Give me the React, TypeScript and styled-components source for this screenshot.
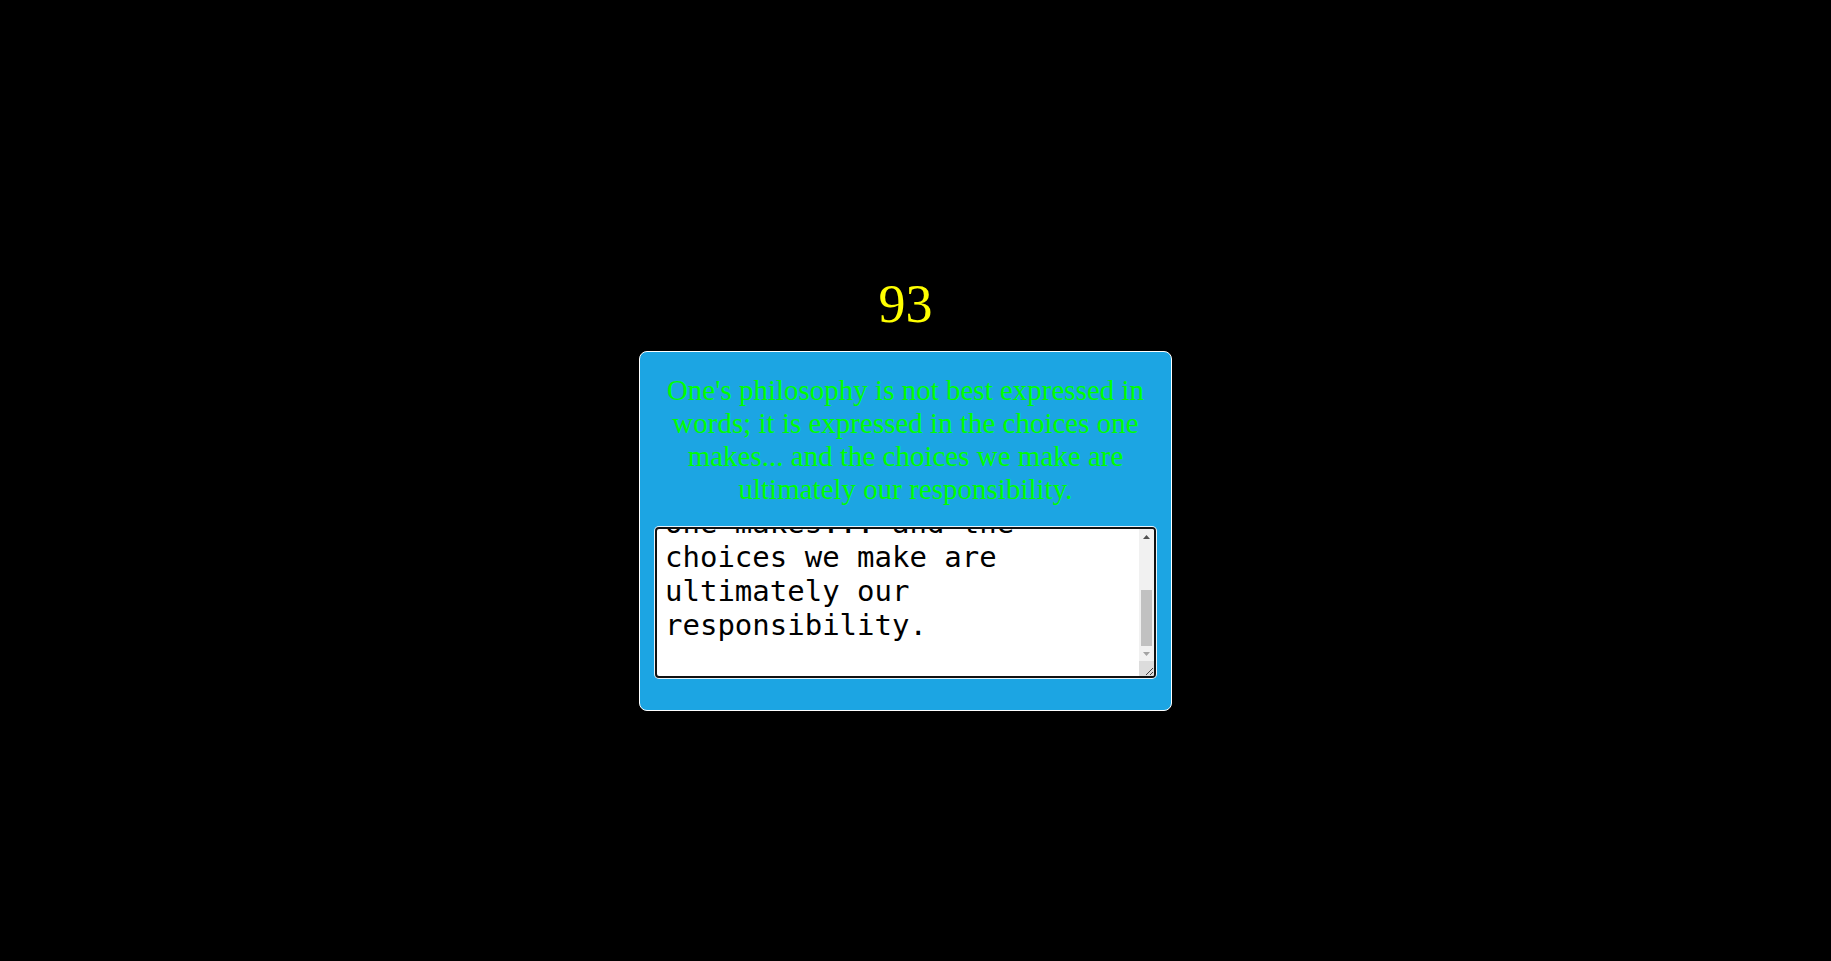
import React, { useEffect, useRef, useState } from 'react'
import styled, { createGlobalStyle } from 'styled-components'

const GlobalStyle = createGlobalStyle`
  html, body {
    margin: 0;
    padding: 0;
    background: #000;
  }
`

const Page = styled.main`
  min-height: 100vh;
  box-sizing: border-box;
  display: flex;
  flex-direction: column;
  align-items: center;
  padding: 270px 20px 0 0;
  font-family: 'Liberation Serif', 'Times New Roman', serif;
`

const Counter = styled.h1`
  margin: 0 0 12px;
  font-size: 54px;
  font-weight: normal;
  color: #ffff00;
  line-height: 69px;
`

const Card = styled.section`
  width: 533px;
  box-sizing: border-box;
  background: #1ca5e3;
  border: 1px solid #fff;
  border-radius: 8px;
  padding: 22px 15px 32px;
`

const Quote = styled.p`
  margin: 0 0 21px;
  font-size: 29px;
  color: #00ff00;
  text-align: center;
`

const EditorWrap = styled.div`
  position: relative;
`

const Editor = styled.textarea`
  display: block;
  width: 100%;
  height: 151px;
  box-sizing: border-box;
  margin: 0;
  padding: 5px 15px 0 8px;
  font-family: 'DejaVu Sans Mono', 'Liberation Mono', monospace;
  font-size: 29px;
  color: #000;
  caret-color: #000;
  background: #fff;
  border: 2px solid #111;
  border-radius: 4px;
  box-shadow: 0 0 0 1px #e8f4fb;
  outline: none;
  resize: both;
  overflow: hidden;
`

/* drawn scrollbar, the headless screenshot hides native ones */
const ScrollBar = styled.div`
  position: absolute;
  top: 2px;
  right: 2px;
  bottom: 2px;
  width: 15px;
  display: flex;
  flex-direction: column;
  background: #f1f1f1;
  pointer-events: none;
  border-radius: 0 2px 2px 0;
  overflow: hidden;
`

const ArrowButton = styled.div`
  height: 15px;
  flex: none;
  display: flex;
  align-items: center;
  justify-content: center;
`

const Track = styled.div`
  flex: 1;
  display: flex;
  flex-direction: column;
  justify-content: flex-end;
  align-items: center;
`

const Thumb = styled.div<{ $size: number }>`
  width: 11px;
  height: ${(p) => p.$size}px;
  background: #c1c1c1;
`

const Corner = styled.div`
  height: 15px;
  flex: none;
  background: #dcdcdc;
  display: flex;
  align-items: flex-end;
  justify-content: flex-end;
`

const QUOTE =
  "One's philosophy is not best expressed in words; it is expressed in the choices one makes... and the choices we make are ultimately our responsibility."

export default function App() {
  const [text, setText] = useState(QUOTE + '\n')
  const ref = useRef<HTMLTextAreaElement>(null)

  useEffect(() => {
    const el = ref.current
    if (!el) return
    el.focus()
    el.setSelectionRange(el.value.length, el.value.length)
    el.scrollTop = el.scrollHeight
  }, [])

  return (
    <>
      <GlobalStyle />
      <Page>
        <Counter>{93}</Counter>
        <Card>
          <Quote>{QUOTE}</Quote>
          <EditorWrap>
            <Editor ref={ref} value={text} onChange={(e) => setText(e.target.value)} />
            <ScrollBar>
              <ArrowButton>
                <svg width="7" height="4" viewBox="0 0 7 4">
                  <polygon points="0,4 3.5,0 7,4" fill="#505050" />
                </svg>
              </ArrowButton>
              <Track>
                <Thumb $size={56} />
              </Track>
              <ArrowButton>
                <svg width="7" height="4" viewBox="0 0 7 4">
                  <polygon points="0,0 7,0 3.5,4" fill="#a3a3a3" />
                </svg>
              </ArrowButton>
              <Corner>
                <svg width="10" height="10" viewBox="0 0 10 10">
                  <path d="M9 2 L2 9 M9 6 L6 9" stroke="#444" strokeWidth="1" />
                </svg>
              </Corner>
            </ScrollBar>
          </EditorWrap>
        </Card>
      </Page>
    </>
  )
}
